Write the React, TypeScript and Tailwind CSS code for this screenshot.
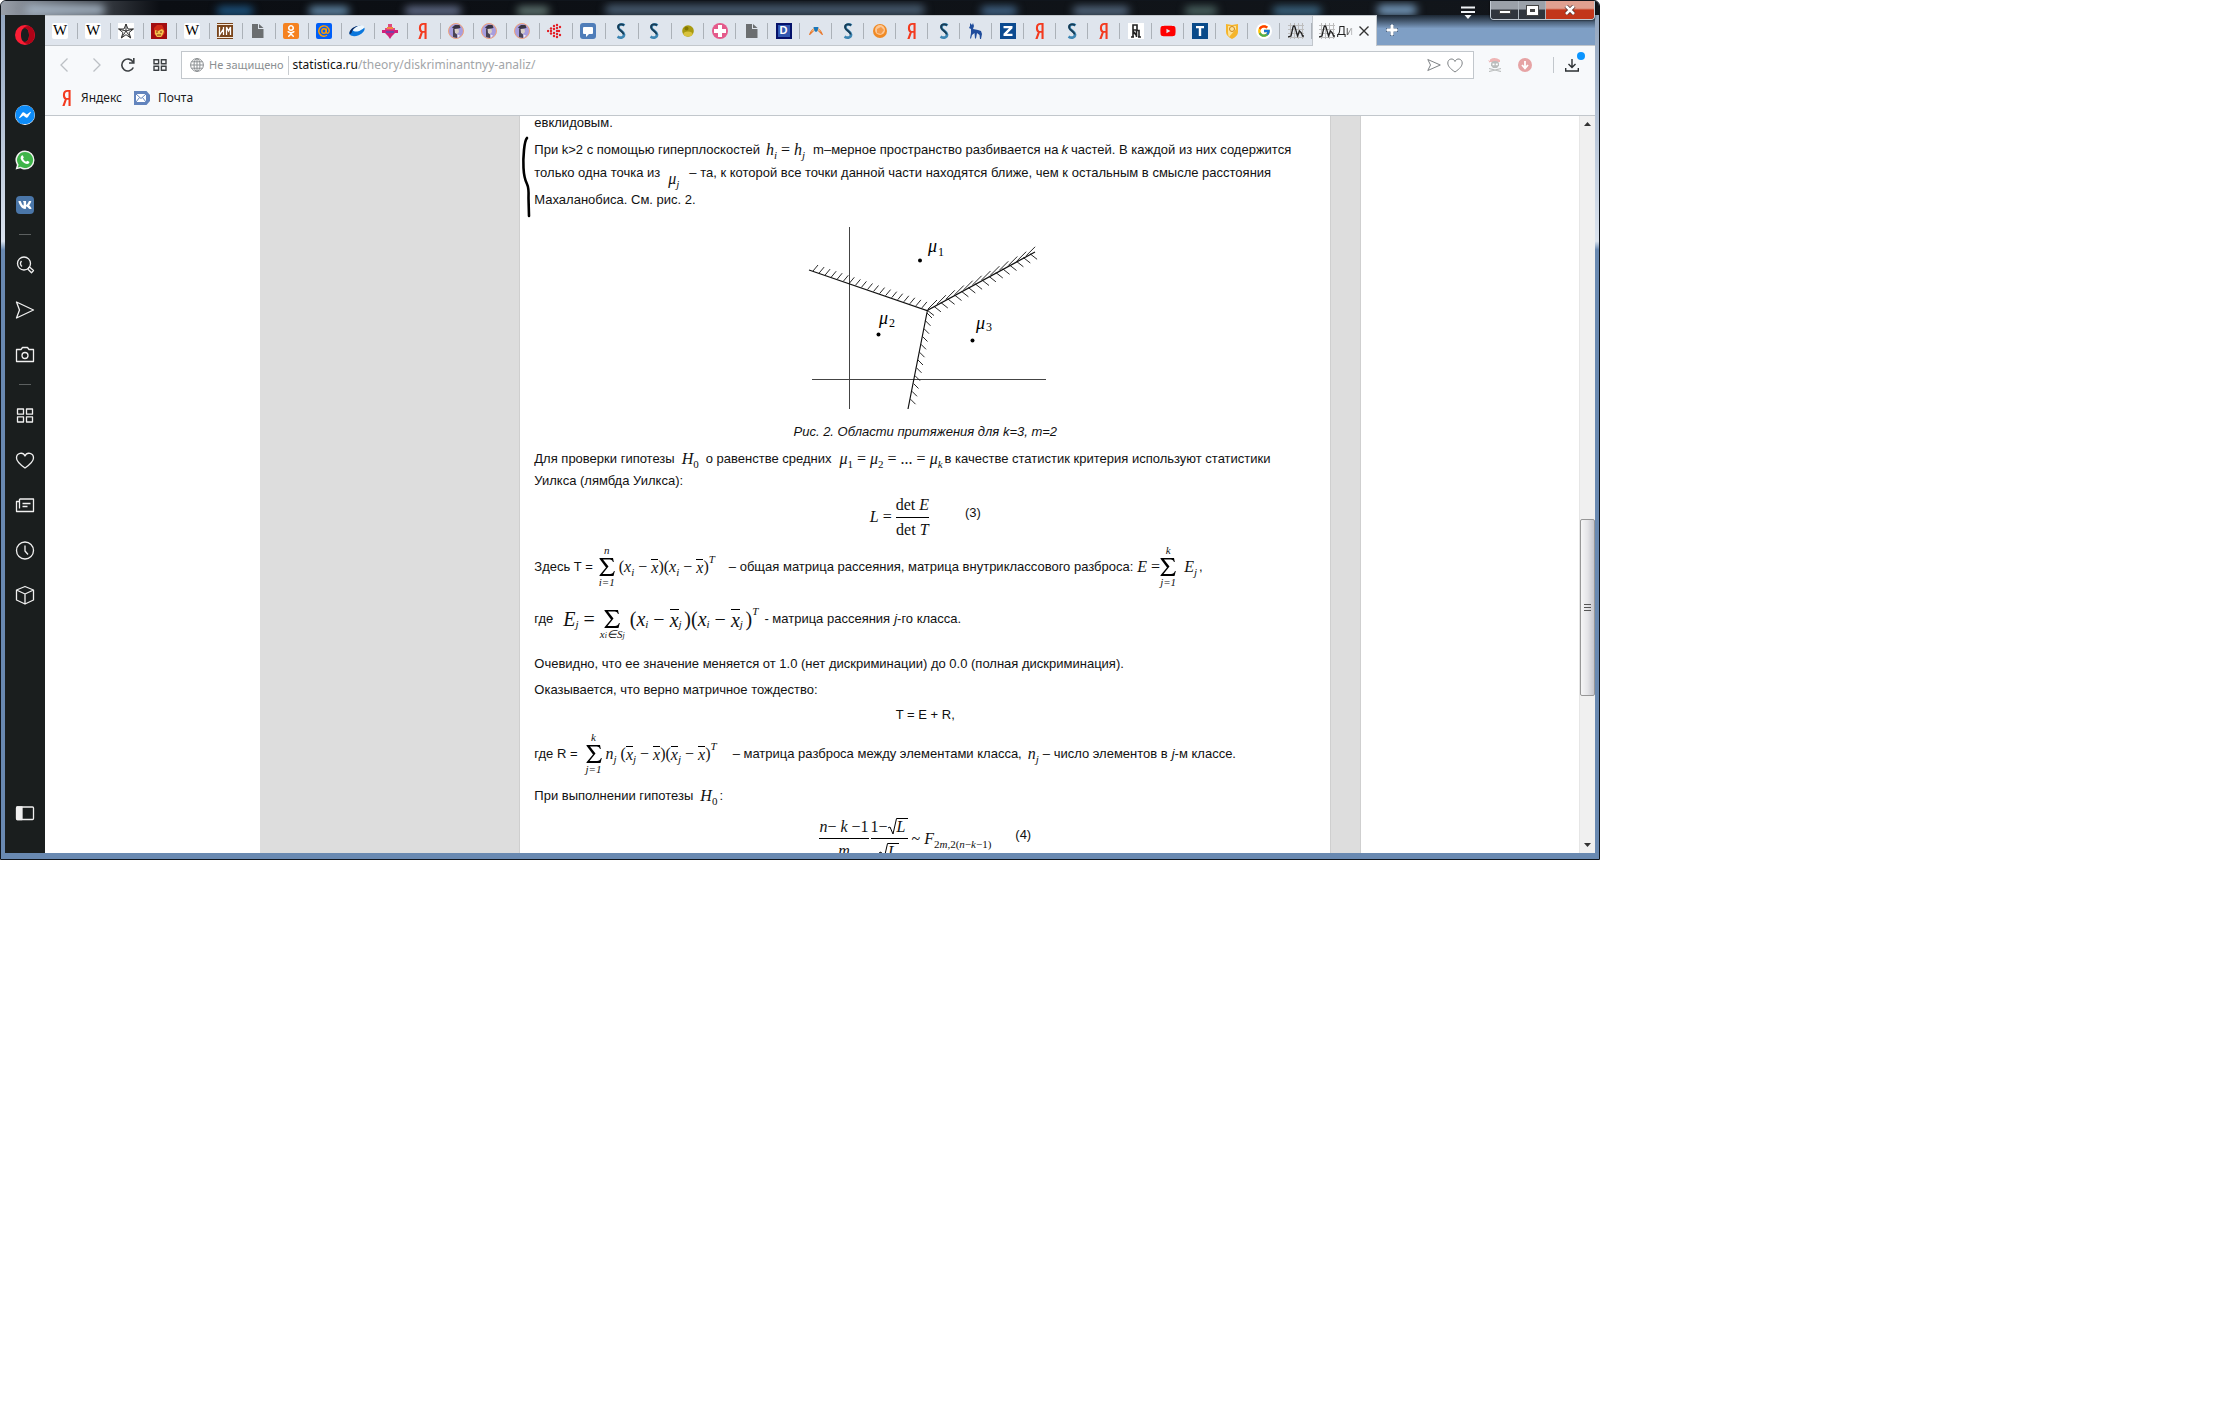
import type { ReactNode } from 'react';
import { FaFacebookMessenger, FaOdnoklassniki, FaVk, FaWhatsapp, FaYoutube } from 'react-icons/fa';
import { FcGoogle } from 'react-icons/fc';

type Box = { children: ReactNode; className?: string };

/* ---------- Tab icons ---------- */

const Svg = ({ children }: { children: ReactNode }) => (
  <svg viewBox="0 0 16 16" className="size-4 shrink-0" aria-hidden="true">
    {children}
  </svg>
);

const Wiki = () => (
  <span className="flex size-4 items-center justify-center rounded-xs bg-white font-['Liberation_Serif'] text-[15px] leading-none text-black">W</span>
);
const Star = () => (
  <Svg>
    <rect width="16" height="16" fill="#fff" />
    <path d="M8 1l2 5h5.400l-4.400 3.600 1.700 5.400L8 11.700 3.300 15 5 9.600.6 6H6z M8 1v7l-4.700 7M8 8l4.700 7M8 8L.6 6M8 8l7.400-2" fill="none" stroke="#333" />
  </Svg>
);
const Iron = () => (
  <Svg>
    <rect width="16" height="16" fill="#a30d10" />
    <path d="M3 5l3-3h5l2 4 1 4-3 4H6L3 11z" fill="#d12b16" />
    <path d="M4 7l3 1 4-2 2 2-1 3-2 3H6l-2-3z" fill="#f2c24c" />
    <path d="M5 9h2M9 9h2M6 12h4" stroke="#8a2b08" />
  </Svg>
);
const Museum = () => (
  <Svg>
    <rect width="16" height="16" fill="#7a451c" />
    <path d="M0 1.500h16M0 14.500h16" stroke="#f4e9dc" strokeWidth="1" />
    <path d="M2.500 4v8l4-6v6M6.500 4v8M9.500 12V4l2 4 2-4v8" fill="none" stroke="#fff" strokeWidth="1.300" />
  </Svg>
);
const Doc = () => (
  <Svg>
    <path d="M2 1h6v5h5.500v9H2z" fill="#6b6e70" />
    <path d="M9 1l4.500 4H9z" fill="#6b6e70" />
  </Svg>
);
const Ok = () => (
  <span className="flex size-4 items-center justify-center rounded-xs bg-[#f58220] text-white">
    <FaOdnoklassniki className="size-3" />
  </span>
);
const MailRu = () => (
  <Svg>
    <rect width="16" height="16" rx="2" fill="#005ff9" />
    <circle cx="8" cy="8" r="2.200" fill="none" stroke="#ff9e00" strokeWidth="1.400" />
    <path d="M10.300 5.500V9q.2 1.400 1.400 1.400T13.200 8A5.200 5.200 0 1 0 11 12.300" fill="none" stroke="#ff9e00" strokeWidth="1.400" />
  </Svg>
);
const Swoosh = () => (
  <Svg>
    <ellipse cx="8" cy="8" rx="8" ry="4.500" transform="rotate(-22 8 8)" fill="#0a77dd" />
    <ellipse cx="9.500" cy="5.500" rx="6" ry="2.500" transform="rotate(-18 9.500 5.500)" fill="#eef8ff" />
    <path d="M.5 11.500C0 7 4 3.500 9 3c-4 2-6 4-6.500 7z" fill="#0b2c66" />
  </Svg>
);
const Pink = () => (
  <Svg>
    <path d="M6 1h4v3H6zM3 5h10v2H3z" fill="#e0497e" />
    <path d="M0 7h16v3h-3l-3 3-2 3-2-3-3-3H0z" fill="#d1217a" />
    <path d="M5 4h6v2H5z" fill="#f08a3c" />
    <path d="M4 8h8v2H4z" fill="#7a3fa5" />
  </Svg>
);
const Ya = () => (
  <Svg>
    <path d="M11.600 0v16H9.500v-6.200H7.800L5.600 16H3.300l2.500-6.700C4.500 8.600 3.900 7.200 3.900 5 3.900 1.700 5.500 0 8.600 0zM9.500 1.700h-.9C6.900 1.700 6 2.700 6 5c0 2 .8 3.100 2.500 3.100h1z" fill="#f33a1f" />
  </Svg>
);
const Person = () => (
  <Svg>
    <circle cx="8" cy="8" r="7.500" fill="#a79ede" stroke="#f0a27a" />
    <path d="M4 4.500L7 2h4.500l1 3-2.500.5-4 .5z" fill="#3a3442" />
    <path d="M6.500 6h4l.5 3-2 2-2-1z" fill="#d8cfc6" />
    <path d="M5 6h1.500l.5 4 2 1.500V15l-4-1z" fill="#4a4352" />
    <path d="M9.500 11.500l2.500 1-2 2.300z" fill="#eee" />
  </Svg>
);
const RedDots = () => (
  <Svg>
    <g fill="#e21f26">
      {[[1, 8], [4, 5.500], [4, 8], [4, 10.500], [7, 3], [7, 6], [7, 10], [7, 13], [10, 2], [10, 5], [10, 8], [10, 11], [10, 14], [13, 4], [13, 12], [12, 8]].map(([x, y]) => (
        <circle key={`${x}-${y}`} cx={x} cy={y} r="1.200" />
      ))}
    </g>
  </Svg>
);
const Chat = () => (
  <Svg>
    <rect width="16" height="16" rx="3" fill="#4f7db9" />
    <path d="M4 4h8q1 0 1 1v5q0 1-1 1H9l-3 3v-3H4q-1 0-1-1V5q0-1 1-1z" fill="#fff" />
  </Svg>
);
const Ess = () => (
  <Svg>
    <path d="M11.500 2.500C9.500.8 5.500 1 5.500 4.200c0 3.300 5.600 4 5.600 7.400 0 3-3.500 4-6.600 2" fill="none" stroke="#3d86b4" strokeWidth="2.600" />
    <path d="M11 2.300C9 .8 5 1 5 4.200c0 3.300 5.600 4 5.600 7.400" fill="none" stroke="#173c55" strokeWidth="1.800" />
  </Svg>
);
const Olive = () => (
  <Svg>
    <circle cx="8" cy="8" r="5.800" fill="#a89a10" />
    <ellipse cx="8" cy="11" rx="4.500" ry="2.500" fill="#d8c23c" />
    <circle cx="6.500" cy="5.500" r="2" fill="#847800" />
  </Svg>
);
const Cross = () => (
  <Svg>
    <circle cx="8" cy="8" r="8" fill="#e45a8b" />
    <path d="M6 2h4v4h4v4h-4v4H6v-4H2V6h4z" fill="#fff" />
  </Svg>
);
const Dee = () => (
  <span className="flex size-4 items-center justify-center border-2 border-[#04116a] bg-[#3157b0] font-['Liberation_Sans'] text-[11px] leading-none font-bold text-white">D</span>
);
const Feather = () => (
  <Svg>
    <path d="M1 12c1-4 4-7 6-7l-1 3-4 4zM15 12c-1-4-4-7-6-7l1 3 4 4z" fill="#e8792e" />
    <path d="M3 9l3-4 1 2zM13 9l-3-4-1 2z" fill="#f3c08a" />
    <path d="M5.500 4h5L9.500 8 8 9 6.500 8z" fill="#1a76b8" />
  </Svg>
);
const Orange = () => (
  <Svg>
    <circle cx="8" cy="8" r="7" fill="#f08a24" />
    <circle cx="8" cy="7" r="5" fill="#fcc795" />
    <path d="M5 6l4-2 3 3-3 4-4-1z" fill="#f49a48" />
  </Svg>
);
const Deer = () => (
  <Svg>
    <path d="M2 0l2 2 1-2 1 3-1 3 5 1 3 1 1 3-1 5h-1l-.500-4L9 10l-1 5.500H7L6.500 10 4 12l-1 3.500H2L3 10l0-4-2-1 1-2z" fill="#1f4c9c" />
  </Svg>
);
const Zed = () => (
  <Svg>
    <rect width="16" height="16" fill="#0b4a90" />
    <path d="M3.500 3h9v2.200L7 10.800h5.500V13h-9v-2.200L9 5.200H3.500z" fill="#fff" />
  </Svg>
);
const Rune = () => (
  <Svg>
    <rect width="16" height="16" fill="#fff" />
    <path d="M5 14V2h4v5H5M8.500 14V7.500H11V14M3 14h3M10 14h3M5 8l3 4" fill="none" stroke="#222" strokeWidth="1.600" />
  </Svg>
);
const Tube = () => <FaYoutube className="size-4 text-[#f00]" />;
const Tee = () => (
  <Svg>
    <rect width="16" height="16" fill="#0a4b8a" />
    <path d="M4 3h8v2.200H9.200V13H6.800V5.200H4z" fill="#fff" />
  </Svg>
);
const Shield = () => (
  <Svg>
    <path d="M2 1l6 1 6-1v8q0 4-6 7-6-3-6-7z" fill="#f5b52c" />
    <path d="M4 3h8v3l-7 8q-1-2-1-5z" fill="#fce39b" />
    <circle cx="8" cy="6" r="2.500" fill="none" stroke="#cf8419" />
  </Svg>
);
const Google = () => (
  <span className="flex size-4 items-center justify-center rounded-full bg-white">
    <FcGoogle className="size-3.5" />
  </span>
);
const Plot = () => (
  <Svg>
    <path d="M0 2.500h16M0 6.500h16M0 10.500h16M0 14.500h16M2.500 0v16M6.500 0v16M10.500 0v16M14.500 0v16" stroke="#bdbdbd" />
    <path d="M0 14l3-1 2-9q1-2 2 0l2.500 9 2-5 2 2 1 3h1.500" fill="none" stroke="#222" strokeWidth="1.300" />
  </Svg>
);

const wideTabs: [string, () => ReactNode][] = [
  ['Википедия', Wiki], ['Википедия 2', Wiki], ['Звезда', Star], ['Комиксы', Iron], ['Википедия 3', Wiki],
  ['Музей', Museum], ['Документ', Doc], ['Одноклассники', Ok], ['Mail.ru', MailRu], ['Облако', Swoosh],
  ['Магазин', Pink], ['Яндекс', Ya], ['Форум', Person], ['Форум 2', Person], ['Форум 3', Person],
  ['Точки', RedDots], ['Чат', Chat], ['Словарь', Ess], ['Словарь 2', Ess],
];
const narrowTabs: [string, () => ReactNode][] = [
  ['Олива', Olive], ['Здоровье', Cross], ['Документ 2', Doc], ['Диплом', Dee], ['Перо', Feather],
  ['Словарь 3', Ess], ['Апельсин', Orange], ['Яндекс 2', Ya], ['Словарь 4', Ess], ['Олень', Deer],
  ['Зачёт', Zed], ['Яндекс 3', Ya], ['Словарь 5', Ess], ['Яндекс 4', Ya], ['Руны', Rune],
  ['YouTube', Tube], ['Тинькофф', Tee], ['Щит', Shield], ['Google', Google], ['Statistica', Plot],
];

/* ---------- Sidebar ---------- */

const Line = ({ children }: { children: ReactNode }) => (
  <svg viewBox="0 0 20 20" className="size-5" fill="none" stroke="#f0f0f0" strokeWidth="1.300" strokeLinejoin="round" aria-hidden="true">
    {children}
  </svg>
);

const SideButton = ({ label, children }: { label: string; children: ReactNode }) => (
  <button aria-label={label} className="flex h-[45px] w-full items-center justify-center">
    {children}
  </button>
);

const Dash = () => (
  <div className="flex h-[15px] items-center">
    <div className="h-px w-3 bg-[#5c6060]" />
  </div>
);

const Sidebar = () => (
  <nav aria-label="Боковая панель" className="flex w-10 shrink-0 flex-col items-center bg-[#1a1e1e]">
    <button aria-label="Opera" className="flex h-10 items-center">
      <svg viewBox="0 0 20 20" className="size-5" aria-hidden="true">
        <path d="M10 0a10 10 0 1 0 0 20 10 10 0 0 0 0-20zm0 3c2.600 0 4 3 4 7s-1.400 7-4 7-4-3-4-7 1.400-7 4-7z" fill="#fa1e35" fillRule="evenodd" />
        <path d="M8 3.500C9 2 11.500.700 14 1a10 10 0 0 1 0 18c-2.500.300-5-1-6-2.500.600.400 1.300.500 2 .500 2.600 0 4-3 4-7s-1.400-7-4-7c-.7 0-1.400.1-2 .5z" fill="#b00317" />
      </svg>
    </button>
    <div className="h-[37px]" />
    <SideButton label="Messenger">
      <FaFacebookMessenger className="size-5 rounded-full bg-white text-[#0e8cf8]" />
    </SideButton>
    <SideButton label="WhatsApp">
      <svg viewBox="0 0 20 20" className="size-5" aria-hidden="true">
        <path d="M10 .5a9.400 9.400 0 0 1 0 19c-1.700 0-3.300-.5-4.700-1.300L.6 19.500l1.300-4.600A9.500 9.500 0 0 1 10 .5z" fill="#f2f2f2" />
        <path d="M10 2a8 8 0 1 1-4.300 14.700L2.800 17.500l.8-2.800A8 8 0 0 1 10 2z" fill="#3fb54a" />
        <path d="M6.800 5.500q.8-.6 1.300.5l.7 1.500-.8 1.300q1 2 3 3l1.300-1 2 1q.5.800-.6 1.800-1.600 1.200-4.500-.6-3-2-3.600-4.500-.2-1.800 1.200-3z" fill="#fff" />
      </svg>
    </SideButton>
    <SideButton label="ВКонтакте">
      <span className="flex size-[18px] items-center justify-center rounded bg-[#4a76a8] text-white">
        <FaVk className="size-3.5" />
      </span>
    </SideButton>
    <Dash />
    <SideButton label="Поиск">
      <Line><circle cx="9" cy="8.500" r="6.500" /><path d="M7 11.500a4 4 0 0 1-.5-5.500M13.500 13l1-1 4 3.600-2 2.200-3.500-3.600z" /></Line>
    </SideButton>
    <SideButton label="Моя лента">
      <Line><path d="M1.500 2l17 8-17 8 3-8z" /></Line>
    </SideButton>
    <SideButton label="Снимок">
      <Line><path d="M1.500 4.500H6L7.500 2.500h5l1.500 2h4.500v12h-17z" /><circle cx="10" cy="10.500" r="3" /></Line>
    </SideButton>
    <Dash />
    <SideButton label="Экспресс-панель">
      <Line><path d="M2.500 4h6v5.200h-6zM11.500 4h6v5.200h-6zM2.500 11.800h6V17h-6zM11.500 11.800h6V17h-6z" /></Line>
    </SideButton>
    <SideButton label="Закладки">
      <Line><path d="M10 18C5 14.500 1.500 11.500 1.500 8 1.500 3 8 1.500 10 6c2-4.500 8.500-3 8.500 2 0 3.500-3.500 6.500-8.500 10z" /></Line>
    </SideButton>
    <SideButton label="Новости">
      <Line><path d="M4.500 4h14v12.500h-17V6.500h3M4.500 4v9.500M7.500 8.500h8M7.500 11.500h5" /></Line>
    </SideButton>
    <SideButton label="История">
      <Line><circle cx="10" cy="10.500" r="8.500" /><path d="M10 5.500v5.500l3 3.500" /></Line>
    </SideButton>
    <SideButton label="Расширения">
      <Line><path d="M10 1.500L18.500 5v10L10 19l-8.500-4V5zM1.500 5l8.500 4 8.500-4M10 9v10" /></Line>
    </SideButton>
    <div className="mt-auto mb-[18px]">
      <SideButton label="Скрыть панель">
        <Line><rect x="1.500" y="4" width="17" height="12.500" rx="1" /><path d="M2 4h5v12.500H2z" fill="#f0f0f0" /></Line>
      </SideButton>
    </div>
  </nav>
);

/* ---------- Title bar, tabs and toolbar ---------- */

const TitleBar = () => (
  <header className="relative h-3.5 shrink-0">
    <div aria-hidden="true" className="absolute inset-y-0 -right-1 -left-1 overflow-hidden bg-linear-to-r from-[#99a0aa] via-[#0b0e13] via-10% to-[#12161b]">
      <div className="flex h-full items-end gap-14 pl-6 blur-xs">
        <span className="h-2.5 w-20 rounded-full bg-[#a5b4c4]" />
        <span className="ml-14 h-2 w-9 rounded-full bg-[#1f5f92]" />
        <span className="h-2 w-10 rounded-full bg-[#6f9cc0]" />
        <span className="h-2 w-14 rounded-full bg-[#707c9c]" />
        <span className="h-2 w-8 rounded-full bg-[#6d8580]" />
        <span className="h-2.5 w-80 rounded-full bg-[#4b6075]" />
        <span className="h-2 w-9 rounded-full bg-[#4a7299]" />
        <span className="h-2 w-14 rounded-full bg-[#5f7690]" />
        <span className="h-2 w-8 rounded-full bg-[#55716d]" />
        <span className="h-2 w-12 rounded-full bg-[#437494]" />
        <span className="h-2.5 w-10 rounded-full bg-[#7aa0c4]" />
      </div>
    </div>
    <div className="absolute top-0 right-0 flex items-start">
      <button aria-label="Меню вкладок" className="mt-[5px] mr-[15px]">
        <svg viewBox="0 0 14 13" className="h-[13px] w-3.5" aria-hidden="true">
          <path d="M0 1.500h14M0 6h14" stroke="#eef1f4" strokeWidth="2" />
          <path d="M3.500 9h7L7 13z" fill="#eef1f4" />
        </svg>
      </button>
      <div className="flex h-[19px] overflow-hidden rounded-b border border-t-0 border-[#c3cbd4] shadow-[0_0_2px_#000]">
        <button aria-label="Свернуть" className="flex w-7 items-center justify-center border-r border-[#aeb6be] bg-linear-to-b from-[#9ba1a9] from-45% to-[#30353d] to-50%">
          <span className="mt-1 h-1 w-3 border border-[#444] bg-white" />
        </button>
        <button aria-label="Развернуть" className="flex w-[27px] items-center justify-center border-r border-[#aeb6be] bg-linear-to-b from-[#9ba1a9] from-45% to-[#30353d] to-50%">
          <span className="h-[9px] w-[11px] border-3 border-white bg-[#444] outline outline-[#444]" />
        </button>
        <button aria-label="Закрыть" className="flex w-12 items-center justify-center bg-linear-to-b from-[#e0a090] from-40% to-[#c2361b] to-50%">
          <svg viewBox="0 0 12 10" className="h-2.5 w-3" aria-hidden="true">
            <path d="M2 1l8 8M10 1L2 9" stroke="#4a2a28" strokeWidth="4" />
            <path d="M2 1l8 8M10 1L2 9" stroke="#fff" strokeWidth="2.600" />
          </svg>
        </button>
      </div>
    </div>
  </header>
);

const tabBase = 'flex shrink-0 items-center';

const TabStrip = () => (
  <div className="flex h-[31px] shrink-0" role="tablist">
    <div className="flex border-t border-b border-[#c2c7cc] bg-[#dfe5ed]">
      {wideTabs.map(([name, Icon]) => (
        <button key={name} role="tab" aria-label={name} className={`${tabBase} w-[33px]`}>
          <span className="flex flex-1 justify-center pr-0.5"><Icon /></span>
          <span className="h-4 w-px bg-[#abb1b8]" />
        </button>
      ))}
      {narrowTabs.map(([name, Icon]) => (
        <button key={name} role="tab" aria-label={name} className={`${tabBase} w-8`}>
          <span className="flex flex-1 justify-center"><Icon /></span>
          <span className="h-4 w-px bg-[#abb1b8]" />
        </button>
      ))}
    </div>
    <div role="tab" aria-selected="true" className="flex w-[65px] shrink-0 items-center border border-b-0 border-[#c2c7cc] bg-[#f7f9fb] pl-1.5">
      <Plot />
      <span className="ml-0.5 w-4 bg-linear-to-r from-[#222] from-50% to-[#22222220] bg-clip-text font-['Noto_Sans'] text-[12px] text-transparent">Ди</span>
      <button aria-label="Закрыть вкладку" className="ml-1.5">
        <svg viewBox="0 0 10 10" className="size-2.5" aria-hidden="true">
          <path d="M.5.5l9 9M9.500.5l-9 9" stroke="#333" strokeWidth="1.400" />
        </svg>
      </button>
    </div>
    <div className="flex flex-1 items-center border-b border-[#c2c7cc] bg-linear-to-b from-[#1c2733] to-[#7f9fc5] to-45% pl-[9px]">
      <button aria-label="Новая вкладка">
        <svg viewBox="0 0 12 12" className="size-3" aria-hidden="true">
          <path d="M4 0h4v4h4v4H8v4H4V8H0V4h4z" fill="#4e6888" />
          <path d="M5 1h2v4h4v2H7v4H5V7H1V5h4z" fill="#fff" stroke="#fff" />
        </svg>
      </button>
    </div>
  </div>
);

const Toolbar = () => (
  <div className="h-[70px] shrink-0 border-b border-[#c2c7cc] bg-[#f7f9fb] font-['Noto_Sans'] text-[12px]">
    <div className="flex h-[38px] items-center pl-[15px]">
      <button aria-label="Назад" className="flex w-[26px] justify-start">
        <svg viewBox="0 0 8 14" className="h-3.5 w-2" fill="none" stroke="#bcc0c4" strokeWidth="1.300"><path d="M7.500.5L1 7l6.500 6.500" /></svg>
      </button>
      <button aria-label="Вперёд" className="ml-[7px] flex w-[26px] justify-start">
        <svg viewBox="0 0 8 14" className="h-3.5 w-2" fill="none" stroke="#bcc0c4" strokeWidth="1.300"><path d="M.5.5L7 7l-6.500 6.500" /></svg>
      </button>
      <button aria-label="Обновить" className="ml-0.5 flex w-8">
        <svg viewBox="0 0 14 14" className="size-3.5" fill="none" stroke="#3c4043" strokeWidth="1.600"><path d="M12.300 9.500A6 6 0 1 1 12 4M12.800 0v5H8" /></svg>
      </button>
      <button aria-label="Экспресс-панель" className="flex w-7">
        <svg viewBox="0 0 14 12" className="h-3 w-3.5" fill="none" stroke="#3c4043" strokeWidth="1.400"><path d="M1 .700h4.600v4H1zM8.400.700H13v4H8.400zM1 7.300h4.600v4H1zM8.400 7.300H13v4H8.400z" /></svg>
      </button>
      <div className="flex h-7 flex-1 items-center border border-[#c2c7cc] bg-white pl-2">
        <svg viewBox="0 0 14 14" className="size-3.5 shrink-0" fill="none" stroke="#8b8f92" aria-hidden="true"><circle cx="7" cy="7" r="6.400" /><ellipse cx="7" cy="7" rx="3" ry="6.400" /><path d="M.6 7h12.800M1.500 3.800h11M1.500 10.200h11M7 .6v12.800" /></svg>
        <span className="ml-[5px] text-[11px] text-[#8b8f92]">Не защищено</span>
        <span className="mr-1 ml-1 h-[19px] w-px bg-[#c8ccd0]" />
        <label htmlFor="url" className="text-[#111]">statistica.ru</label>
        <input id="url" defaultValue="/theory/diskriminantnyy-analiz/" className="min-w-0 flex-1 text-[#a2a5a8] outline-none" />
        <button aria-label="Отправить" className="mr-1.5">
          <svg viewBox="0 0 14 14" className="size-3.5" fill="none" stroke="#7d8184"><path d="M.8 1.500L13.300 7 .8 12.500 3.500 7z" /></svg>
        </button>
        <button aria-label="В закладки" className="mr-2.5">
          <svg viewBox="0 0 16 15" className="h-[15px] w-4" fill="none" stroke="#7d8184"><path d="M8 14C3 10.500.8 8 .8 5 .8.500 6.500-.500 8 3.500 9.500-.500 15.200.500 15.200 5c0 3-2.200 5.500-7.200 9z" /></svg>
        </button>
      </div>
      <button aria-label="Пират" className="ml-3.5">
        <svg viewBox="0 0 14 14" className="size-3.5" aria-hidden="true">
          <path d="M2 1.500Q7-1.500 12 2v2L2 4zM0 2l2 1v2z" fill="#eeb5b5" />
          <path d="M3 6q0-3 4-3t4 3v1.500l-2 2.500H5L3 7.500z" fill="#b9bcbc" />
          <path d="M4.500 5.500h2v1.800h-2zM7.800 5.500h2v1.800h-2z" fill="#fff" />
          <path d="M1 10.500l12 3M13 10.500l-12 3" stroke="#b9bcbc" strokeWidth="1.200" />
        </svg>
      </button>
      <button aria-label="Загрузчик" className="ml-4">
        <svg viewBox="0 0 14 14" className="size-3.5" aria-hidden="true"><circle cx="7" cy="7" r="7" fill="#e6a3a4" /><path d="M7 3v7M4 7l3 3.300L10 7" fill="none" stroke="#fff" strokeWidth="1.800" /></svg>
      </button>
      <span className="ml-[21px] h-4 w-px bg-[#c2c7cc]" />
      <button aria-label="Загрузки" className="relative mr-4 ml-[11px]">
        <svg viewBox="0 0 14 14" className="size-3.5" fill="none" stroke="#2c3033" strokeWidth="1.400"><path d="M7 1v8.500M3.500 6L7 9.500 10.500 6M.7 10v3h12.600v-3" /></svg>
        <span className="absolute -top-1.5 -right-1.5 size-2 rounded-full bg-[#0a95ff]" />
      </button>
    </div>
    <div className="flex h-7 items-center pl-3.5 text-[#1b1b1b]">
      <a href="#yandex" className="flex items-center gap-1.5"><Ya />Яндекс</a>
      <a href="#mail" className="ml-3 flex items-center gap-2">
        <Svg>
          <path d="M0 1h12.500L16 5v6l-3.500 4H0z" fill="#6284bd" />
          <path d="M2 4h10v8H2z" fill="#fff" />
          <path d="M2 4l5 4.500L12 4M2 12l3.500-4.500M12 12L8.500 7.500" fill="none" stroke="#6284bd" />
        </Svg>
        Почта
      </a>
    </div>
  </div>
);

/* ---------- Formulas ---------- */

const M = ({ children, className = '' }: Box) => (
  <span className={`inline-flex shrink-0 items-center font-['Liberation_Serif'] text-[16px] leading-none whitespace-pre italic ${className}`}>{children}</span>
);
const Big = ({ children, className = '' }: Box) => (
  <span className={`inline-flex shrink-0 items-center font-['Liberation_Serif'] text-[20px] leading-none whitespace-pre italic ${className}`}>{children}</span>
);
const Sub = ({ children }: Box) => <span className="mt-2.5 text-[11px]">{children}</span>;
const Sup = ({ children }: Box) => <span className="mb-4 text-[11px]">{children}</span>;
const Up = ({ children }: Box) => <span className="not-italic">{children}</span>;
const Bar = ({ children }: Box) => <span className="border-t border-black">{children}</span>;
const Sum = ({ top, bottom }: { top?: string; bottom: ReactNode }) => (
  <span className="inline-flex flex-col items-center text-[11px] leading-none">
    <span className="h-3">{top}</span>
    <svg viewBox="0 0 16 20" className="h-5 w-4" aria-label="сумма">
      <path d="M.5 1H14l.8 4H14q-.5-2.500-3-2.500H4l5.500 7L3.500 17H11q3 0 4-3h.8L14.500 19H.5v-.8L7 10.500.5 1.800z" fill="#000" />
    </svg>
    <span className="h-3">{bottom}</span>
  </span>
);
const Root = ({ children }: Box) => (
  <span className="inline-flex items-start">
    <svg viewBox="0 0 9 17" className="h-[17px] w-[9px]" aria-hidden="true">
      <path d="M0 10l2-1 3 7L8.500.5H9" fill="none" stroke="#000" />
    </svg>
    <span className="border-t border-black pr-0.5">{children}</span>
  </span>
);

/* ---------- Figure ---------- */

const hatch = (x1: number, y1: number, x2: number, y2: number, n: number, dx: number, dy: number) =>
  Array.from({ length: n }, (_, i) => {
    const t = i / n;
    const x = x1 + (x2 - x1) * t;
    const y = y1 + (y2 - y1) * t;
    return `M${x.toFixed(1)} ${y.toFixed(1)}l${dx} ${dy}`;
  }).join('');

const Figure = () => (
  <svg viewBox="-4 1 260 199" className="mx-auto h-[199px] w-[260px]" role="img" aria-label="Области притяжения">
    <g fill="none" stroke="#444">
      <path d="M50.500 12v182M13 164.500h234" />
    </g>
    <g fill="none" stroke="#111" strokeWidth="1">
      <path d="M10 55L128 95.500 236 37M128.500 95L109 194" strokeWidth="1.200" />
      <path d={hatch(14, 56, 129, 95, 19, 5, -6)} strokeWidth=".9" />
      <path d={hatch(128, 95, 238, 35, 16, 7, 5.500)} strokeWidth=".9" />
      <path d={hatch(129, 94, 236, 36, 12, 9, -9)} strokeWidth=".9" />
      <path d={hatch(128, 98, 110, 192, 12, 5, 5)} strokeWidth=".9" />
    </g>
    <circle cx="121" cy="45.500" r="2" />
    <circle cx="79.500" cy="119.500" r="2" />
    <circle cx="173.500" cy="125.500" r="2" />
    <g fontFamily="Liberation Serif" fontSize="18" fontStyle="italic">
      <text x="129" y="37">μ</text>
      <text x="80" y="109">μ</text>
      <text x="177" y="114">μ</text>
    </g>
    <g fontFamily="Liberation Serif" fontSize="12">
      <text x="139" y="41">1</text>
      <text x="90" y="112">2</text>
      <text x="187" y="116">3</text>
    </g>
  </svg>
);

/* ---------- Page ---------- */

const Row = ({ children, className = '' }: Box) => (
  <p className={`flex items-center whitespace-nowrap ${className}`}>{children}</p>
);

const Article = () => (
  <article className="relative w-[810px] shrink-0 bg-white px-3.5 font-['Liberation_Sans'] text-[13px] leading-4 text-[#111]">
    <svg viewBox="0 0 12 82" className="absolute top-5 left-0 h-[82px] w-3" fill="none" stroke="#000" strokeWidth="2.600" strokeLinecap="round" aria-hidden="true">
      <path d="M7 2Q5 4 4 14T3.500 32Q4 42 7 48 9 52 8.500 62L9 80" />
    </svg>
    <Row className="h-3.5">евклидовым.</Row>
    <Row className="mt-2 h-6">
      При k&gt;2 с помощью гиперплоскостей
      <M className="mx-1.5">h<Sub>i</Sub><Up> = </Up>h<Sub>j</Sub></M>
      <span className="ml-0.5">m–мерное</span>&nbsp;пространство разбивается на <i className="mx-[3px]">k</i> частей. В каждой из них содержится
    </Row>
    <Row className="h-[22px]">
      только одна точка из
      <M className="mt-3 mr-2.5 ml-2">μ<Sub>j</Sub></M>
      – та, к которой все точки данной части находятся ближе, чем к остальным в смысле расстояния
    </Row>
    <Row className="h-8">Махаланобиса. См. рис. 2.</Row>
    <figure>
      <Figure />
      <figcaption className="flex h-[33px] items-center justify-center italic">Рис. 2. Области притяжения для k=3, m=2</figcaption>
    </figure>
    <Row className="h-[22px]">
      Для проверки гипотезы
      <M className="mx-[7px]">H<Sub><Up>0</Up></Sub></M>
      о равенстве средних
      <M className="mr-0.5 ml-2">μ<Sub><Up>1</Up></Sub><Up> = </Up>μ<Sub><Up>2</Up></Sub><Up> = ... = </Up>μ<Sub>k</Sub></M>
      в качестве статистик критерия используют статистики
    </Row>
    <Row className="h-[22px]">Уилкса (лямбда Уилкса):</Row>
    <Row className="h-[50px] justify-center">
      <M>
        L<Up> = </Up>
        <span className="inline-flex flex-col items-center">
          <span className="border-b border-black pb-1"><Up>det </Up>E</span>
          <span className="pt-1"><Up>det </Up>T</span>
        </span>
      </M>
      <span className="mb-2 ml-9">(3)</span>
    </Row>
    <Row className="mt-0.5 h-[46px]">
      Здесь T =
      <M className="mr-3.5 ml-1.5"><Sum top="n" bottom="i=1" /><Up> (</Up>x<Sub>i</Sub><Up> − </Up><Bar>x</Bar><Up>)(</Up>x<Sub>i</Sub><Up> − </Up><Bar>x</Bar><Up>)</Up><Sup>T</Sup></M>
      – общая матрица рассеяния, матрица внутриклассового разброса:
      <M className="mr-0.5 ml-1">E<Up> =</Up><Sum top="k" bottom="j=1" />  E<Sub>j</Sub></M>
      ,
    </Row>
    <Row className="mt-1 h-[50px]">
      где
      <Big className="mr-1.5 ml-2.5">
        E<Sub>j</Sub><Up> = </Up>
        <Sum bottom={<>x<span className="text-[8px]">i</span>∈S<span className="text-[8px]">j</span></>} />
        <Up> (</Up>x<Sub>i</Sub><Up> − </Up><Bar>x</Bar><Sub>j </Sub><Up>)(</Up>x<Sub>i</Sub><Up> − </Up><Bar>x</Bar><Sub>j </Sub><Up>)</Up><Sup>T</Sup>
      </Big>
      - матрица рассеяния <i className="ml-1">j</i>-го класса.
    </Row>
    <Row className="mt-2 h-6">Очевидно, что ее значение меняется от 1.0 (нет дискриминации) до 0.0 (полная дискриминация).</Row>
    <Row className="mt-0.5 h-6">Оказывается, что верно матричное тождество:</Row>
    <Row className="h-[26px] justify-center">T = E + R,</Row>
    <Row className="h-[52px]">
      где R =
      <M className="mr-4 ml-2"><Sum top="k" bottom="j=1" /> n<Sub>j</Sub><Up> (</Up><Bar>x</Bar><Sub>j</Sub><Up> − </Up><Bar>x</Bar><Up>)(</Up><Bar>x</Bar><Sub>j</Sub><Up> − </Up><Bar>x</Bar><Up>)</Up><Sup>T</Sup></M>
      – матрица разброса между элементами класса,
      <M className="mr-1 ml-1.5">n<Sub>j</Sub></M>
      – число элементов в <i className="ml-1">j</i>-м классе.
    </Row>
    <Row className="mt-1 h-6">
      При выполнении гипотезы
      <M className="mr-0.5 ml-[7px]">H<Sub><Up>0</Up></Sub></M>
      :
    </Row>
    <Row className="h-[62px] justify-center">
      <M>
        <span className="inline-flex flex-col items-center">
          <span className="flex h-6 items-center border-b border-black">n<Up>− </Up>k<Up> −1</Up></span>
          <span className="flex h-6 items-center">m</span>
        </span>
        <span className="ml-0.5 inline-flex flex-col items-center">
          <span className="flex h-6 items-center border-b border-black"><Up>1−</Up><Root>L</Root></span>
          <span className="flex h-6 items-center"><Root>L</Root></span>
        </span>
        <Up> ~ </Up>F<Sub><Up>2</Up>m<Up>,2(</Up>n<Up>−</Up>k<Up>−1)</Up></Sub>
      </M>
      <span className="mb-2 ml-6">(4)</span>
    </Row>
  </article>
);

const Scrollbar = () => (
  <div className="flex w-4 shrink-0 flex-col items-center border-l border-[#e6e6e6] bg-[#f0f0f0]">
    <button aria-label="Вверх" className="flex h-4 items-center">
      <svg viewBox="0 0 7 4" className="h-1 w-[7px]"><path d="M3.500 0L7 4H0z" fill="#333" /></svg>
    </button>
    <div className="flex-388" />
    <div className="flex min-h-8 w-[15px] flex-176 flex-col items-center justify-center gap-0.5 rounded-xs border border-[#979797] bg-linear-to-r from-[#f6f6f7] via-[#e5e5e8] to-[#c6c6cd]">
      <span className="h-px w-[7px] bg-[#555]" />
      <span className="h-px w-[7px] bg-[#555]" />
      <span className="h-px w-[7px] bg-[#555]" />
    </div>
    <div className="flex-141" />
    <button aria-label="Вниз" className="flex h-4 items-center">
      <svg viewBox="0 0 7 4" className="h-1 w-[7px]"><path d="M3.500 4L7 0H0z" fill="#333" /></svg>
    </button>
  </div>
);

export default function App() {
  return (
    <main className="min-h-screen bg-white">
      <div className="flex h-[860px] w-5/7 flex-col overflow-hidden rounded-t-md border border-[#10151c] bg-linear-to-b from-[#8fa3bd] from-0% via-[#dbe3ee] via-28% to-[#6989b1] to-29% px-1 pb-1.5">
        <TitleBar />
        <div className="flex min-h-0 flex-1">
          <Sidebar />
          <div className="flex min-w-0 flex-1 flex-col">
            <TabStrip />
            <Toolbar />
            <div className="flex min-h-0 flex-1 overflow-hidden bg-white">
              <div className="flex min-w-0 flex-1 overflow-hidden">
                <div className="flex-215" />
                <div className="flex-260 border-r border-[#cfcfcf] bg-[#dddddd]" />
                <Article />
                <div className="w-[31px] shrink-0 border-x border-[#cfcfcf] bg-[#dddddd]" />
                <div className="flex-218" />
              </div>
              <Scrollbar />
            </div>
          </div>
        </div>
      </div>
    </main>
  );
}
